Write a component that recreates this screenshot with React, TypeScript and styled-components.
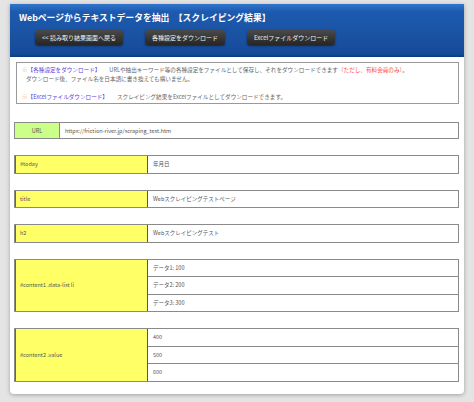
import styled, { createGlobalStyle } from "styled-components";

const GlobalStyle = createGlobalStyle`
  html, body {
    margin: 0;
    padding: 0;
    background: #e4e4e4;
  }
  body {
    font-family: "Noto Sans CJK JP", "Noto Sans", "Liberation Sans", sans-serif;
    color: #555;
  }
`;

type Item = { label: string; values: string[] };

const items: Item[] = [
  { label: "#today", values: ["年月日"] },
  { label: "title", values: ["Webスクレイピングテストページ"] },
  { label: "h2", values: ["Webスクレイピングテスト"] },
  { label: "#content1 .data-list li", values: ["データ1: 100", "データ2: 200", "データ3: 300"] },
  { label: "#content2 .value", values: ["400", "500", "600"] },
];

const App = () => {
  return (
    <>
      <GlobalStyle />
      <Page>
        <Card>
          <Header>
            <Title>Webページからテキストデータを抽出　【スクレイピング結果】</Title>
            <ButtonBar>
              <DarkButton>&lt;&lt; 読み取り結果画面へ戻る</DarkButton>
              <DarkButton>各種設定をダウンロード</DarkButton>
              <DarkButton>Excelファイルダウンロード</DarkButton>
            </ButtonBar>
          </Header>
          <Body>
            <Note>
              <NoteLine>
                <Mark>※</Mark>
                <LinkText>【各種設定をダウンロード】</LinkText>
                <Spacer />
                URLや抽出キーワード等の各種設定をファイルとして保存し、それをダウンロードできます
                <Warn>（ただし、有料会員のみ）</Warn>。
              </NoteLine>
              <NoteLine $indent>ダウンロード後、ファイル名を日本語に書き換えても構いません。</NoteLine>
              <NoteLine $gap>
                <Mark>※</Mark>
                <LinkText>【Excelファイルダウンロード】</LinkText>
                <Spacer />
                スクレイピング結果をExcelファイルとしてダウンロードできます。
              </NoteLine>
            </Note>

            <UrlTable>
              <UrlLabel>URL</UrlLabel>
              <UrlValue>https://friction-river.jp/scraping_test.htm</UrlValue>
            </UrlTable>

            {items.map((item) => (
              <ResultTable key={item.label}>
                <KeyCell>{item.label}</KeyCell>
                <Values>
                  {item.values.map((v) => (
                    <ValueCell key={v}>{v}</ValueCell>
                  ))}
                </Values>
              </ResultTable>
            ))}
          </Body>
        </Card>
      </Page>
    </>
  );
};

export default App;

const Page = styled.div`
  width: 474px;
  height: 402px;
  padding: 4px 10px 0 10px;
  box-sizing: border-box;
`;

const Card = styled.div`
  background: #fff;
  border-radius: 0 0 4px 4px;
  box-shadow: 0 1px 4px rgba(0, 0, 0, 0.3);
  padding-bottom: 12px;
`;

const Header = styled.div`
  height: 53px;
  box-sizing: border-box;
  padding: 7px 9px 0 9px;
  background: linear-gradient(#3276cc 0%, #1d5bb0 14%, #1a52a2 60%, #154a98 94%, #0d3a80 100%);
`;

const Title = styled.div`
  color: #fff;
  font-size: 8.8px;
  font-weight: bold;
  line-height: 14px;
  white-space: nowrap;
`;

const ButtonBar = styled.div`
  display: flex;
  gap: 22px;
  padding-left: 16px;
  margin-top: 5px;
`;

const DarkButton = styled.div`
  height: 15px;
  padding: 0 7px;
  display: flex;
  align-items: center;
  border-radius: 3px;
  background: linear-gradient(#4a4a4a, #262626);
  box-shadow: 0 1px 2px rgba(0, 0, 0, 0.5);
  color: #f2f2f2;
  font-size: 6px;
  white-space: nowrap;
`;

const Body = styled.div`
  padding: 5px 5px 0 4px;
`;

const Note = styled.div`
  margin-left: 2px;
  border: 1px solid #9a9a9a;
  padding: 3px 5px 5px 5px;
  height: 42px;
  box-sizing: border-box;
  font-size: 5.6px;
  color: #666;
`;

const NoteLine = styled.div<{ $indent?: boolean; $gap?: boolean }>`
  line-height: 9px;
  white-space: nowrap;
  padding-left: ${(p) => (p.$indent ? "4px" : "0")};
  margin-top: ${(p) => (p.$gap ? "9px" : "0")};
`;

const Mark = styled.span`
  color: #f2b27a;
`;

const LinkText = styled.span`
  color: #5a3fe0;
`;

const Warn = styled.span`
  color: #ff4444;
`;

const Spacer = styled.span`
  display: inline-block;
  width: 9px;
`;

const UrlTable = styled.div`
  margin-top: 18px;
  display: flex;
  height: 15px;
  border: 1px solid #8a8a8a;
  font-size: 5.5px;
`;

const UrlLabel = styled.div`
  width: 44px;
  background: #ccff88;
  border-right: 1px solid #8a8a8a;
  display: flex;
  align-items: center;
  justify-content: center;
  color: #555;
`;

const UrlValue = styled.div`
  flex: 1;
  display: flex;
  align-items: center;
  padding-left: 5px;
  color: #555;
`;

const ResultTable = styled.div`
  margin-top: 16px;
  display: flex;
  border: 1px solid #8a8a8a;
  font-size: 5.5px;
`;

const KeyCell = styled.div`
  width: 127px;
  background: #ffff66;
  border-right: 1px solid #555;
  border-left: 1px solid #666;
  padding-left: 4px;
  display: flex;
  align-items: center;
  color: #555;
`;

const Values = styled.div`
  flex: 1;
  display: flex;
  flex-direction: column;
`;

const ValueCell = styled.div`
  height: 16.5px;
  display: flex;
  align-items: center;
  padding-left: 5px;
  color: #555;
  & + & {
    border-top: 1px solid #8a8a8a;
  }
`;
